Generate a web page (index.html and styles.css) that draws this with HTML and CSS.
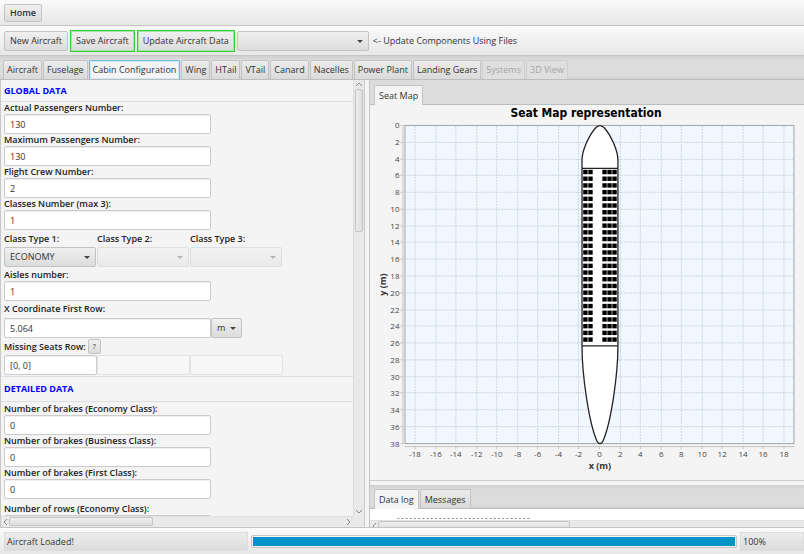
FILE: index.html
```html
<!DOCTYPE html>
<html lang="en">
<head>
<meta charset="utf-8">
<title>Aircraft Designer</title>
<link rel="stylesheet" href="styles.css">
</head>
<body>
<header class="toolbar toolbar-home"><button class="btn home" type="button">Home</button></header>
<div class="toolbar toolbar-actions">
  <button class="btn" type="button">New Aircraft</button>
  <button class="btn marked" type="button">Save Aircraft</button>
  <button class="btn marked" type="button">Update Aircraft Data</button>
  <span class="combo combo-files"><select id="files"><option></option></select></span>
  <label for="files">&lt;- Update Components Using Files</label>
</div>
<nav class="tabs main-tabs">
  <button class="tab" type="button">Aircraft</button>
  <button class="tab" type="button">Fuselage</button>
  <button class="tab focused" type="button">Cabin Configuration</button>
  <button class="tab" type="button">Wing</button>
  <button class="tab" type="button">HTail</button>
  <button class="tab" type="button">VTail</button>
  <button class="tab" type="button">Canard</button>
  <button class="tab" type="button">Nacelles</button>
  <button class="tab" type="button">Power Plant</button>
  <button class="tab" type="button">Landing Gears</button>
  <button class="tab" type="button" disabled>Systems</button>
  <button class="tab" type="button" disabled>3D View</button>
</nav>
<main class="workspace">
  <section class="form-pane">
    <form class="form">
      <h2>GLOBAL DATA</h2>
      <div class="field"><label for="actual">Actual Passengers Number:</label><input id="actual" value="130"></div>
      <div class="field"><label for="maximum">Maximum Passengers Number:</label><input id="maximum" value="130"></div>
      <div class="field"><label for="crew">Flight Crew Number:</label><input id="crew" value="2"></div>
      <div class="field"><label for="classes">Classes Number (max 3):</label><input id="classes" value="1"></div>
      <div class="class-types">
        <label for="c1">Class Type 1:</label><label for="c2">Class Type 2:</label><label for="c3">Class Type 3:</label>
        <span class="combo"><select id="c1"><option>ECONOMY</option></select></span>
        <span class="combo off"><select id="c2" disabled><option></option></select></span>
        <span class="combo off"><select id="c3" disabled><option></option></select></span>
      </div>
      <div class="field spaced"><label for="aisles">Aisles number:</label><input id="aisles" value="1"></div>
      <div class="field spaced coordinate"><label for="xrow">X Coordinate First Row:</label>
        <div class="unit-row"><input id="xrow" value="5.064"><span class="combo combo-unit"><select aria-label="Unit"><option>m</option></select></span></div>
      </div>
      <div class="missing-label"><label for="m1">Missing Seats Row:</label><button class="btn help" type="button">?</button></div>
      <div class="missing-row"><input id="m1" value="[0, 0]"><input aria-label="Row 2" disabled><input aria-label="Row 3" disabled></div>
      <h2 class="detailed">DETAILED DATA</h2>
      <div class="field"><label for="b1">Number of brakes (Economy Class):</label><input id="b1" value="0"></div>
      <div class="field"><label for="b2">Number of brakes (Business Class):</label><input id="b2" value="0"></div>
      <div class="field"><label for="b3">Number of brakes (First Class):</label><input id="b3" value="0"></div>
      <div class="field last"><label for="r1">Number of rows (Economy Class):</label><input id="r1" value="0"></div>
    </form>
    <div class="vscroll">
      <svg viewBox="0 0 10 8"><path d="M2 6 5 3 8 6"/></svg>
      <div class="track"><div class="vthumb"></div></div>
      <svg viewBox="0 0 10 8"><path d="M2 2 5 5 8 2"/></svg>
    </div>
    <div class="hscroll">
      <svg viewBox="0 0 8 10"><path d="M6 2 3 5 6 8"/></svg>
      <div class="track"><div class="hthumb"></div></div>
      <svg viewBox="0 0 8 10"><path d="M2 2 5 5 2 8"/></svg>
    </div>
    <div class="corner"></div>
  </section>
  <div class="divider"></div>
  <section class="view-pane">
    <div class="tabs sub-tabs map-tabs"><button class="tab current" type="button">Seat Map</button></div>
    <div class="chart-area"><svg id="chart" viewBox="370 103 434 376" role="img" aria-label="Seat map"></svg></div>
    <div class="split"></div>
    <div class="tabs sub-tabs"><button class="tab current" type="button">Data log</button><button class="tab" type="button">Messages</button></div>
    <div class="log"><pre>--------------------------------</pre></div>
    <div class="hscroll log-scroll">
      <svg viewBox="0 0 8 10"><path d="M6 2 3 5 6 8"/></svg>
      <div class="track"><div class="hthumb log-thumb"></div></div>
    </div>
  </section>
</main>
<footer class="status">
  <span class="status-box message">Aircraft Loaded!</span>
  <div class="progress"><div class="bar"></div></div>
  <span class="status-box percent">100%</span>
</footer>
<script src="chart.js"></script>
</body>
</html>
```
FILE: styles.css
```css
* { box-sizing: border-box; }
body { margin: 0; height: 100vh; display: flex; flex-direction: column; overflow: hidden; background: #f4f4f4; color: #333; font: 9px/12px "Open Sans", "Noto Sans", sans-serif; }
button, input, select { font: inherit; color: inherit; margin: 0; }
.toolbar { display: flex; align-items: center; padding: 0 4px; background: linear-gradient(#fafafa, #e7e7e7); border-bottom: 1px solid #c4c4c4; flex: none; }
.toolbar-home { height: 26px; }
.toolbar-actions { height: 30px; gap: 2px; }
.btn { height: 20px; padding: 0 5px; border: 1px solid #c3c3c3; border-radius: 2px; background: linear-gradient(#f0f0f0, #dcdcdc); white-space: nowrap; }
.home { height: 18px; font-weight: 600; }
.marked { height: 22px; border: 1px solid #32cd32; border-radius: 0; box-shadow: inset 0 0 0 1px #a5e6a5; }
.combo { position: relative; display: block; }
.combo select { display: block; appearance: none; width: 100%; height: 20px; padding: 0 5px; border: 1px solid #c3c3c3; border-radius: 2px; background: linear-gradient(#f0f0f0, #dcdcdc); opacity: 1; }
.combo::after { content: ""; position: absolute; right: 6px; top: 9px; border: 3px solid transparent; border-top-color: #444; border-bottom: 0; }
.combo.off select { background: linear-gradient(#f2f2f2, #eaeaea); border-color: #dfdfdf; }
.combo.off::after { border-top-color: #b4b4b4; }
.combo-files { width: 132px; }
.toolbar label { padding-left: 2px; }
.tabs { display: flex; align-items: flex-end; flex: none; gap: 1px; background: linear-gradient(#d0d0d0, #dcdcdc 4px, #dcdcdc 20px, #d2d2d2); border-bottom: 1px solid #bdbdbd; }
.main-tabs { height: 24px; padding: 0 3px; }
.tab { height: 19px; padding: 0 3px; border: 1px solid #c3c3c3; border-bottom: 0; border-radius: 2px 2px 0 0; background: linear-gradient(#ebebeb, #dadada); white-space: nowrap; }
.tab:disabled { color: #a5a5a5; border-color: #cfcfcf; background: #dfdfdf; }
.tab.focused { background: #f4f4f4; border: 1px solid #6fbfdf; border-bottom: 0; box-shadow: inset 0 0 0 1px #cfeaf5; }
.sub-tabs { height: 24px; padding: 0 4px; }
.sub-tabs .tab { height: 20px; padding: 1px 4px 0; margin-bottom: -1px; border-bottom: 1px solid #bdbdbd; }
.sub-tabs .current { border-bottom: 0; background: #f4f4f4; }
.map-tabs { height: 25px; background: #dcdcdc; }
.workspace { flex: 1; min-height: 0; display: flex; }
.form-pane { flex: 0 0 365px; min-width: 0; display: grid; grid-template: minmax(0, 1fr) 11px / minmax(0, 1fr) 11px; border-left: 1px solid #c8c8c8; border-right: 1px solid #c8c8c8; }
.form { overflow: hidden; min-height: 0; }
.form h2 { margin: 0; height: 22px; padding-left: 3px; border-bottom: 1px solid #dedede; color: #00f; font-size: 9px; line-height: 22px; font-weight: 700; }
.form .detailed { height: 26px; margin-bottom: 1px; margin-top: 1px; border-top: 1px solid #dedede; line-height: 24px; }
.form label { display: block; font-weight: 600; color: #222; line-height: 12px; white-space: nowrap; }
.field, .class-types, .missing-label, .missing-row { padding-left: 3px; }
.form input { display: block; width: 207px; height: 20px; padding: 0 5px; border: 1px solid #ccc; border-radius: 2px; background: #fff; box-shadow: inset 0 1px 1px #eee; }
.class-types { display: grid; grid-template-columns: repeat(3, 92px); gap: 2px 1px; padding-top: 3px; }
.spaced { padding-top: 2px; }
.last { padding-top: 4px; }
.unit-row { display: flex; margin-top: 3px; }
.combo-unit { width: 31px; }
.missing-label { display: flex; align-items: center; gap: 2px; height: 17px; }
.help { width: 13px; height: 15px; padding: 0; font-size: 7px; }
.missing-row { display: flex; }
.form .missing-row input { width: 93px; }
.form input:disabled { background: #f7f7f7; border-color: #e2e2e2; box-shadow: none; }
.vscroll { display: flex; flex-direction: column; background: #e9e9e9; border-left: 1px solid #dcdcdc; }
.hscroll { display: flex; background: #e9e9e9; border-top: 1px solid #e0e0e0; }
.corner { background: #e9e9e9; }
.vscroll svg { width: 10px; height: 8px; }
.hscroll svg { width: 8px; height: 10px; flex: none; }
.vscroll path, .hscroll path { fill: none; stroke: #888; stroke-width: 1; }
.track { flex: 1; min-width: 0; }
.vthumb { height: 34%; margin: 1px; border: 1px solid #c4c4c4; border-radius: 2px; background: linear-gradient(90deg, #eee, #dedede); }
.hthumb { width: 43%; height: 9px; border: 1px solid #c4c4c4; border-radius: 2px; background: linear-gradient(#eee, #dedede); }
.divider { flex: 0 0 5px; background: #f4f4f4; border-right: 1px solid #c4c4c4; }
.view-pane { flex: 1; min-width: 0; display: flex; flex-direction: column; }
.chart-area { flex: 1; min-height: 0; }
.chart-area svg { display: block; width: 100%; height: 100%; }
.split { height: 5px; flex: none; border-top: 1px solid #cfcfcf; }
.log { height: 11px; flex: none; background: #fff; }
.log pre { margin: 0 0 0 26px; padding-top: 4px; font: 7px/10px "Liberation Mono", monospace; color: #333; }
.log-scroll { height: 7px; flex: none; overflow: hidden; }
.log-thumb { width: 45%; }
.status { flex: none; height: 27px; display: flex; align-items: center; gap: 3px; padding-left: 4px; background: linear-gradient(#fafafa, #e7e7e7); border-top: 1px solid #c4c4c4; }
.status-box { height: 19px; line-height: 18px; padding: 0 2px; background: linear-gradient(#ececec, #dcdcdc); border: 1px solid #ddd; }
.message { flex: 0 0 244px; }
.progress { flex: 1; height: 13px; padding: 1px; border: 1px solid #c8c8c8; border-radius: 2px; }
.bar { height: 9px; background: #0093c8; }
.percent { flex: 0 0 64px; }
.title { font: 700 12px "DejaVu Sans Condensed", sans-serif; fill: #000; text-anchor: middle; }
.axis-name { font-size: 9px; font-weight: 700; fill: #333; text-anchor: middle; }
.tick { font-size: 8px; fill: #444; text-anchor: middle; }
.tick.left { text-anchor: end; }
.plot { fill: #f0f7ff; stroke: #a0a4a8; }
.grid { stroke: #cbd5dd; stroke-dasharray: 2 1; }
.axis { stroke: #c4c4c4; }
.hull { fill: #fff; stroke: #222; stroke-width: 1.3; }
.bulkhead { stroke: #222; stroke-width: 1.3; }
.seat { fill: #000; }
```
FILE: chart.js
```js
const chart = document.getElementById('chart');
const NS = 'http://www.w3.org/2000/svg';
function add(name, attrs, text) {
  const el = document.createElementNS(NS, name);
  for (const key in attrs) el.setAttribute(key, attrs[key]);
  if (text !== undefined) el.textContent = text;
  chart.appendChild(el);
}
const left = 404.5, right = 794.5, top_ = 123.5, bottom = 442.5;
const px = v => Math.round(600 + v * 10.27) - 0.5;
const py = v => Math.round(124 + v * 8.39) - 0.5;

add('text', { class: 'title', x: 586, y: 115 }, 'Seat Map representation');
add('rect', { class: 'plot', x: left, y: top_, width: right - left, height: bottom - top_ });
add('path', { class: 'axis', d: 'M402.5 123V443M404 445.5H795' });
for (let v = -18; v <= 18; v += 2) {
  add('path', { class: 'grid', d: `M${px(v)} 124V442` });
  add('path', { class: 'axis', d: `M${px(v)} 445V448` });
  add('text', { class: 'tick', x: px(v), y: 456 }, v);
}
for (let v = 0; v <= 38; v += 2) {
  if (v > 0 && v < 38) add('path', { class: 'grid', d: `M405 ${py(v)}H794` });
  add('path', { class: 'axis', d: `M400 ${py(v)}H403` });
  add('text', { class: 'tick left', x: 399, y: py(v) + 3 }, v);
}
add('text', { class: 'axis-name', x: 600, y: 468 }, 'x (m)');
add('text', { class: 'axis-name', transform: 'translate(385 283) rotate(-90)' }, 'y (m)');
add('path', { class: 'hull', d: 'M582 345V158C582 149 589 133 596 125.500Q600 122 604 125.500C611 133 618 149 618 158V345C618 374 611 422 603 440Q600 445 597 440C589 422 582 374 582 345Z' });
add('path', { class: 'bulkhead', d: 'M582 166.500H618M582 344.500H618' });
for (let row = 0; row < 26; row++)
  for (const x of [583.2, 588.3, 602.4, 607.4, 612.4])
    add('rect', { class: 'seat', x, y: 168 + row * 6.72, width: 4.4, height: 4.4 });
```
